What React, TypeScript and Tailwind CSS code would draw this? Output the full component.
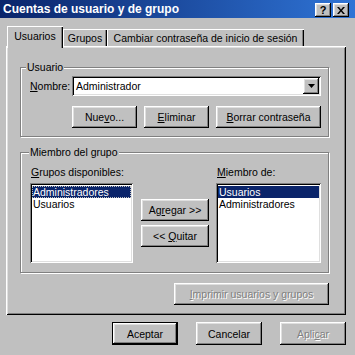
import React from "react";

const raised =
  "bg-[#c0c0c0] shadow-[inset_-1px_-1px_#000,inset_1px_1px_#fff,inset_-2px_-2px_#808080,inset_2px_2px_#dfdfdf]";
const sunken =
  "bg-white shadow-[inset_1px_1px_#808080,inset_-1px_-1px_#fff,inset_2px_2px_#000,inset_-2px_-2px_#dfdfdf]";
const disabledText = "text-[#808080] [text-shadow:1px_1px_0_#fff]";

function Btn({
  children,
  className,
  disabled,
}: {
  children: React.ReactNode;
  className: string;
  disabled?: boolean;
}) {
  return (
    <div
      className={`${raised} ${className} flex items-center justify-center leading-[12px] ${
        disabled ? disabledText : "text-black"
      }`}
    >
      <span className="whitespace-pre">{children}</span>
    </div>
  );
}

function Group({
  label,
  labelClass,
  className,
  children,
}: {
  label: string;
  labelClass: string;
  className: string;
  children: React.ReactNode;
}) {
  return (
    <div
      className={`relative border border-[#808080] shadow-[inset_1px_1px_#fff,1px_1px_#fff] ${className}`}
    >
      <div
        className={`absolute top-[-7px] ${labelClass} bg-[#c0c0c0] px-[1px] leading-[12px]`}
      >
        {label}
      </div>
      {children}
    </div>
  );
}

export default function App() {
  return (
    <div className="w-[355px] h-[355px] bg-[#c0c0c0] flex flex-col overflow-hidden font-['Liberation_Sans',Arial,sans-serif] text-[10.5px] text-black select-none">
      {/* Title bar */}
      <div className="h-[18px] flex items-center pl-[3px] pr-[6px] bg-[linear-gradient(to_right,#0a246a,#2f74d6)]">
        <div className="flex-1 text-white font-bold text-[12px] leading-[14px] whitespace-nowrap">
          Cuentas de usuario y de grupo
        </div>
        <div className="flex gap-[2px] mt-[2px]">
          <div className={`${raised} w-[16px] h-[14px] flex items-center justify-center font-bold text-[11px] leading-[11px]`}>
            ?
          </div>
          <div className={`${raised} w-[16px] h-[14px] flex items-center justify-center`}>
            <svg width="8" height="7" viewBox="0 0 8 7">
              <path d="M0 0h2l2 2.5L6 0h2L5 3.5 8 7H6L4 4.5 2 7H0l3-3.5z" fill="#000" />
            </svg>
          </div>
        </div>
      </div>

      {/* Tabs */}
      <div className="mt-[8px] h-[20px] pl-[7px] flex items-end">
        <div className="relative z-10 w-[56px] h-[22px] mb-[-2px] bg-[#c0c0c0] shadow-[inset_1px_1px_#fff,inset_-1px_0_#000,inset_-2px_0_#808080] flex items-center justify-center pb-[2px] leading-[12px]">
          Usuarios
        </div>
        <div className="w-[44px] h-[17px] bg-[#c0c0c0] shadow-[inset_1px_1px_#fff,inset_-1px_0_#000,inset_-2px_0_#808080] flex items-center justify-center leading-[12px]">
          Grupos
        </div>
        <div className="w-[197px] h-[17px] bg-[#c0c0c0] shadow-[inset_1px_1px_#fff,inset_-1px_0_#000,inset_-2px_0_#808080] flex items-center justify-center leading-[12px] whitespace-nowrap">
          Cambiar contraseña de inicio de sesión
        </div>
      </div>

      {/* Tab panel */}
      <div className="ml-[6px] w-[340px] h-[269px] flex flex-col pl-[14px] shadow-[inset_1px_1px_#fff,inset_-1px_-1px_#000,inset_2px_2px_#dfdfdf,inset_-2px_-2px_#808080]">
        <Group label="Usuario" labelClass="left-[5px]" className="mt-[21px] w-[309px] h-[70px] flex flex-col pt-[8px]">
          <div className="flex items-center pl-[9px]">
            <div className="w-[42px] leading-[12px]">
              <u>N</u>ombre:
            </div>
            <div className={`${sunken} w-[249px] h-[20px] p-[2px] flex items-center`}>
              <span className="flex-1 pl-[2px] leading-[12px]">Administrador</span>
              <div className={`${raised} w-[16px] h-[16px] flex items-center justify-center`}>
                <svg width="7" height="4" viewBox="0 0 7 4">
                  <path d="M0 0h7L3.5 4z" fill="#000" />
                </svg>
              </div>
            </div>
          </div>
          <div className="flex mt-[10px] pl-[51px] gap-[7px]">
            <Btn className="w-[65px] h-[22px]">
              Nue<u>v</u>o...
            </Btn>
            <Btn className="w-[65px] h-[22px]">
              <u>E</u>liminar
            </Btn>
            <Btn className="w-[105px] h-[22px]">
              <u>B</u>orrar contraseña
            </Btn>
          </div>
        </Group>

        <Group label="Miembro del grupo" labelClass="left-[8px]" className="mt-[15px] w-[309px] h-[121px] flex pt-[13px] pl-[9px]">
          <div className="w-[103px] flex flex-col">
            <div className="h-[13px] leading-[13px] pl-[1px] mb-[4px]">
              <u>G</u>rupos disponibles:
            </div>
            <div className={`${sunken} h-[80px] pt-[3px] px-[2px] flex flex-col`}>
              <div className="h-[12px] leading-[12px] px-[1px] bg-[#0a246a] text-white outline-dotted outline-1 outline-[#c0c0c0] -outline-offset-1">
                Administradores
              </div>
              <div className="h-[13px] leading-[13px] px-[1px]">Usuarios</div>
            </div>
          </div>
          <div className="w-[68px] ml-[8px] flex flex-col pt-[33px] gap-[4px]">
            <Btn className="w-[68px] h-[22px]">
              {"Ag"}<u>r</u>{"egar >>"}
            </Btn>
            <Btn className="w-[68px] h-[22px]">
              {"<< "}<u>Q</u>{"uitar"}
            </Btn>
          </div>
          <div className="w-[105px] ml-[7px] flex flex-col">
            <div className="h-[13px] leading-[13px] pl-[1px] mb-[4px]">
              <u>M</u>iembro de:
            </div>
            <div className={`${sunken} h-[80px] pt-[3px] px-[2px] flex flex-col`}>
              <div className="h-[12px] leading-[12px] px-[1px] bg-[#0a246a] text-white">Usuarios</div>
              <div className="h-[13px] leading-[13px] px-[1px]">Administradores</div>
            </div>
          </div>
        </Group>

        <div className="w-[309px] flex justify-end mt-[10px]">
          <Btn className="w-[155px] h-[22px]" disabled>
            <u>I</u>mprimir usuarios y grupos
          </Btn>
        </div>
      </div>

      {/* Bottom buttons */}
      <div className="mt-[7px] flex justify-end pr-[9px] gap-[18px]">
        <div className="w-[66px] h-[23px] border border-black">
          <div className="w-full h-full shadow-[inset_-1px_-1px_#000,inset_1px_1px_#fff,inset_-2px_-2px_#808080,inset_2px_2px_#dfdfdf] flex items-center justify-center leading-[12px]">
            Aceptar
          </div>
        </div>
        <Btn className="w-[66px] h-[23px]">Cancelar</Btn>
        <Btn className="w-[66px] h-[23px]" disabled>
          Apli<u>c</u>ar
        </Btn>
      </div>
    </div>
  );
}
